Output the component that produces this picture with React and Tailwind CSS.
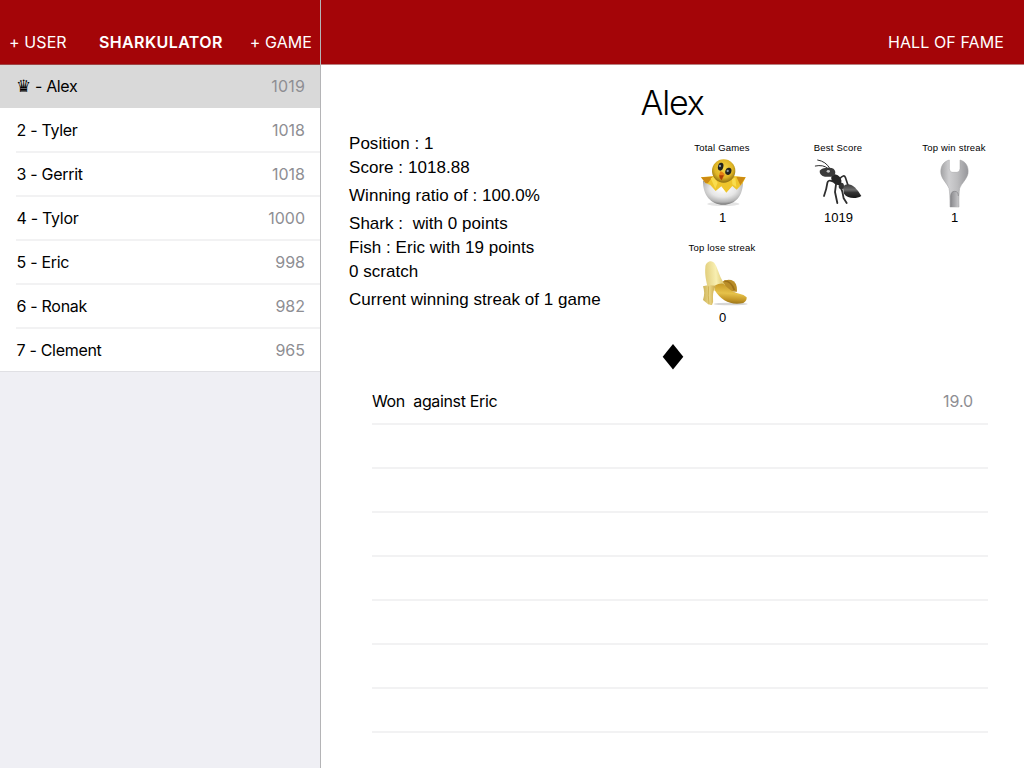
import React from "react";

const players = [
  { label: "Tyler", rank: "2", score: "1018", row: "h-[45px] border-b-2" },
  { label: "Gerrit", rank: "3", score: "1018", row: "h-11 border-b-2 pb-px" },
  { label: "Tylor", rank: "4", score: "1000", row: "h-11 border-b-2 pb-px" },
  { label: "Eric", rank: "5", score: "998", row: "h-11 border-b-2 pb-px" },
  { label: "Ronak", rank: "6", score: "982", row: "h-11 border-b-2 pb-px" },
  { label: "Clement", rank: "7", score: "965", row: "h-[42px] pb-px" },
];

function ChickIcon() {
  return (
    <svg viewBox="12 24 168 150" className="h-[50px] w-14">
      <defs>
        <radialGradient id="shell" cx="0.5" cy="0.35" r="0.66">
          <stop offset="0" stopColor="#ffffff" />
          <stop offset="0.5" stopColor="#e6e6e6" />
          <stop offset="0.82" stopColor="#b4b4b4" />
          <stop offset="1" stopColor="#6e6e6e" />
        </radialGradient>
        <radialGradient id="head" cx="0.5" cy="0.4" r="0.6">
          <stop offset="0" stopColor="#f5d847" />
          <stop offset="0.65" stopColor="#dfb526" />
          <stop offset="1" stopColor="#8d6f12" />
        </radialGradient>
      </defs>
      <ellipse cx="100" cy="162" rx="48" ry="6" fill="#e4e4e4" />
      <path d="M39 92 C38 135 63 164 100 164 C137 164 160 137 159 92 L138 105 L127 95 L107 125 L92 101 L77 118 L61 97 Z" fill="url(#shell)" />
      <path d="M33 82 L70 78 L132 78 L167 82 L158 100 L140 119 L127 108 L109 128 L94 109 L77 123 L61 105 L48 100 Z" fill="#eec52b" />
      <path d="M33 82 L68 80 L54 99 L47 100 Z M167 82 L139 80 L151 106 Z" fill="#cd8a12" />
      <path d="M62 85 L72 80 L83 98 L76 116 Z M126 87 L136 83 L139 111 L127 103 Z" fill="#f9dc4e" />
      <circle cx="101" cy="63" r="35" fill="url(#head)" />
      <ellipse cx="92" cy="50" rx="8" ry="12" fill="#20211d" transform="rotate(14 92 50)" />
      <ellipse cx="115" cy="64" rx="9" ry="11" fill="#20211d" transform="rotate(18 115 64)" />
      <circle cx="90" cy="48" r="3.5" fill="#8c9ba3" />
      <circle cx="113" cy="63" r="3.5" fill="#8c9ba3" />
      <path d="M91 64 Q102 67 104 75 L95 91 Q87 84 87 76 Z" fill="#e78016" />
      <path d="M88 76 L101 76 L95 91 Q87 85 88 76 Z" fill="#aa4107" />
    </svg>
  );
}

function AntIcon() {
  return (
    <svg viewBox="12 24 168 150" className="h-[50px] w-14">
      <defs>
        <linearGradient id="ant" x1="0" y1="0" x2="0" y2="1">
          <stop offset="0" stopColor="#3a3a3a" />
          <stop offset="0.4" stopColor="#6c6c6c" />
          <stop offset="0.6" stopColor="#333" />
          <stop offset="1" stopColor="#171717" />
        </linearGradient>
      </defs>
      <g fill="none" stroke="#2e2e2e" strokeLinecap="round" strokeLinejoin="round">
        <path d="M72 56 Q60 34 35 30 M65 55 Q52 43 28 48" strokeWidth="3" />
        <path d="M80 94 Q66 88 64 99 Q62 116 54 138" strokeWidth="5.5" />
        <path d="M90 103 L87 126 L94 159" strokeWidth="5.5" />
        <path d="M101 104 L109 125 L113 145 L122 159" strokeWidth="5.5" />
        <path d="M101 86 Q114 72 118 82 L126 106" strokeWidth="5" />
      </g>
      <path d="M111 113 C117 98 134 102 146 112 Q156 121 166 138 C150 148 124 146 114 131 Z" fill="url(#ant)" />
      <ellipse cx="106" cy="108" rx="8" ry="10" fill="#333" />
      <ellipse cx="91" cy="89" rx="18" ry="13" fill="#262626" transform="rotate(48 91 89)" />
      <path d="M41 62 Q49 52 67 53 Q86 52 88 66 Q88 79 75 80 L57 80 Q40 76 41 62" fill="#3a3a3a" />
      <ellipse cx="67" cy="64" rx="5" ry="4" fill="#c8c8c8" />
    </svg>
  );
}

function WrenchIcon() {
  return (
    <svg viewBox="12 24 168 150" className="h-[50px] w-14">
      <defs>
        <linearGradient id="steel" x1="0" y1="0" x2="1" y2="0">
          <stop offset="0" stopColor="#a3a3a5" />
          <stop offset="0.3" stopColor="#cfcfd1" />
          <stop offset="0.6" stopColor="#bdbdbf" />
          <stop offset="1" stopColor="#96969a" />
        </linearGradient>
        <linearGradient id="groove" x1="0" y1="0" x2="1" y2="0">
          <stop offset="0" stopColor="#8b8b8e" />
          <stop offset="0.5" stopColor="#a7a7aa" />
          <stop offset="1" stopColor="#c6c6c8" />
        </linearGradient>
      </defs>
      <path d="M82 30 C64 34 54 50 57 72 C60 89 76 101 81 115 Q84 128 84 171 H111 Q110 132 113 115 C118 100 134 89 138 71 C141 50 131 34 114 30 V55 Q114 66 105 67 H90 Q82 65 82 56 Z" fill="url(#steel)" stroke="#a0a0a3" strokeWidth="1.5" />
      <path d="M86 171 V138 Q87 124 98 124 Q109 124 109 138 V171 Z" fill="url(#groove)" />
      <path d="M86 171 V138 Q87 124 98 124 Q109 124 109 138" fill="none" stroke="#808083" strokeWidth="2" />
    </svg>
  );
}

function BananaIcon() {
  return (
    <svg viewBox="12 24 168 150" className="h-[50px] w-14">
      <defs>
        <linearGradient id="flesh" x1="0" y1="0.1" x2="1" y2="0">
          <stop offset="0" stopColor="#e3d07f" />
          <stop offset="0.5" stopColor="#f8efb2" />
          <stop offset="1" stopColor="#d3b856" />
        </linearGradient>
        <linearGradient id="peel" x1="0.1" y1="0" x2="0" y2="1">
          <stop offset="0" stopColor="#c99b28" />
          <stop offset="0.45" stopColor="#e6c24a" />
          <stop offset="0.75" stopColor="#c39626" />
          <stop offset="1" stopColor="#8d6916" />
        </linearGradient>
        <linearGradient id="flap" x1="0" y1="0" x2="1" y2="0">
          <stop offset="0" stopColor="#cdb45a" />
          <stop offset="0.5" stopColor="#ead586" />
          <stop offset="1" stopColor="#c7a545" />
        </linearGradient>
      </defs>
      <ellipse cx="122" cy="162" rx="51" ry="4" fill="#d6d6d6" />
      <path d="M91 98 Q108 86 124 90 Q143 97 141 125 L110 124 Z" fill="#b98d28" />
      <path d="M103 93 Q124 93 133 120" fill="none" stroke="#9b7019" strokeWidth="5" />
      <path d="M46 52 C46 34 67 27 75 42 C87 63 88 82 106 106 L92 128 L54 116 C48 91 44 74 46 52 Z" fill="url(#flesh)" />
      <path d="M76 106 Q88 99 100 101 C112 113 126 126 148 131 Q162 133 170 142 Q171 153 160 159 C124 167 94 153 74 120 Z" fill="url(#peel)" />
      <path d="M39 109 Q54 103 78 107 Q68 122 69 142 Q71 157 66 165 Q56 167 49 158 Q43 154 39 150 Q46 128 39 109 Z" fill="url(#flap)" />
      <path d="M56 109 Q53 136 57 162" fill="none" stroke="#d0b558" strokeWidth="3" />
    </svg>
  );
}

function Badge({ title, value, children }) {
  return (
    <div className="flex h-[100px] w-[116px] flex-col items-center">
      <div className="h-4 pt-px text-[9.5px] leading-4 tracking-[0.2px] whitespace-pre">{title}</div>
      <div className="mt-[3px] h-[50px]">{children}</div>
      <div className="mt-0.5 h-4 pl-px text-[13px] leading-4">{value}</div>
    </div>
  );
}

function Sidebar() {
  return (
    <aside className="flex w-80 shrink-0 flex-col bg-[#efeff4]">
      <header className="flex h-[65px] items-end border-b border-[#9e4444] bg-[#a40508] pb-[10px] text-[16px] leading-6 text-white">
        <span className="w-[99px] pl-[9px] tracking-[0.1px]">+ USER</span>
        <span className="flex-1 font-semibold tracking-[0.38px]">SHARKULATOR</span>
        <span className="pr-2 tracking-[0.08px]">+ GAME</span>
      </header>
      <div className="flex h-[43px] items-center justify-between bg-[#d9d9d9] pr-[15px] pb-[2px] pl-4 text-[16px] tracking-[-0.35px]">
        <span className="flex items-center">
          <span className="w-[19px] font-['DejaVu_Sans'] text-[17px] leading-5">♛</span>
          <span>- Alex</span>
        </span>
        <span className="tracking-[0.15px] text-[#8e8e93]">1019</span>
      </div>
      <ul className="border-b border-[#e0e0e4] bg-white pl-4">
        {players.map((p) => (
          <li
            key={p.rank}
            className={
              "flex items-center justify-between border-[#f2f2f3] pr-[15px] text-[16px] tracking-[-0.3px] " + p.row
            }
          >
            <span className="pl-[0.5px]">{p.rank} - {p.label}</span>
            <span className="tracking-[0px] text-[#8e8e93]">{p.score}</span>
          </li>
        ))}
      </ul>
    </aside>
  );
}

export default function App() {
  return (
    <div className="flex h-[768px] w-[1024px] overflow-hidden bg-white font-['Inter',sans-serif] text-black">
      <Sidebar />
      <div className="w-px shrink-0 bg-[#b4b4b6]" />
      <main className="flex min-w-0 flex-1 flex-col">
        <header className="flex h-[65px] shrink-0 items-end justify-end border-b border-[#b98080] bg-[#a40508] pr-5 pb-[10px] text-[16px] leading-6 tracking-[0.1px] text-white">
          HALL OF FAME
        </header>
        <h1 className="mt-4 h-11 pr-px text-center text-[34px] leading-11 font-light tracking-[-1.2px]">Alex</h1>
        <section className="mt-1.5 flex h-[201px] font-['Liberation_Sans',sans-serif]">
          <div className="w-[343px] pt-px pl-7 text-[17px] leading-6 tracking-[0.04px] whitespace-pre">
            <p>Position : 1</p>
            <p>Score : 1018.88</p>
            <p className="mt-1">Winning ratio of : 100.0%</p>
            <p className="mt-1">{"Shark :  with 0 points"}</p>
            <p>Fish : Eric with 19 points</p>
            <p>0 scratch</p>
            <p className="mt-1">Current winning streak of 1 game</p>
          </div>
          <div className="mt-2 grid h-[200px] grid-cols-[116px_116px_116px]">
            <Badge title="Total Games" value="1"><ChickIcon /></Badge>
            <Badge title="Best Score" value="1019"><AntIcon /></Badge>
            <Badge title="Top win streak" value="1"><WrenchIcon /></Badge>
            <Badge title="Top lose streak" value="0"><BananaIcon /></Badge>
          </div>
        </section>
        <div className="mt-3 flex h-[26px] justify-center pl-px">
          <svg viewBox="0 0 22 26" className="h-[26px] w-[22px]">
            <path d="M11 0 L21.3 12.8 L11 25.6 L0.7 12.8 Z" />
          </svg>
        </div>
        <section className="mt-[11px] mr-9 ml-[51px]">
          <div className="flex h-11 items-center justify-between border-b-2 border-[#f2f2f3] pr-[15px] pb-0.5 text-[16px] tracking-[-0.35px]">
            <span className="whitespace-pre">{"Won  against Eric"}</span>
            <span className="tracking-[-0.1px] text-[#8e8e93]">19.0</span>
          </div>
          {[0, 1, 2, 3, 4, 5, 6].map((n) => (
            <div key={n} className="h-11 border-b-2 border-[#f2f2f3]" />
          ))}
        </section>
      </main>
    </div>
  );
}
